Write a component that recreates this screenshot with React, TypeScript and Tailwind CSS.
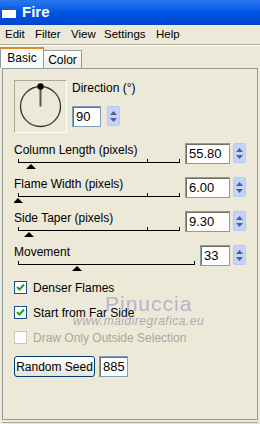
const font = { fontFamily: '"Liberation Sans", Arial, sans-serif' }

const Spinner = () => (
  <div className="flex h-[20px] w-[13px] flex-col items-center justify-center gap-[3px] rounded-[2px] border border-[#b7c8f2] bg-[#c3d3fd]">
    <svg width="7" height="4" viewBox="0 0 7 4">
      <path d="M0 4 L3.5 0 L7 4 Z" fill="#4d6185" />
    </svg>
    <svg width="7" height="4" viewBox="0 0 7 4">
      <path d="M0 0 L3.5 4 L7 0 Z" fill="#4d6185" />
    </svg>
  </div>
)

const NumBox = ({ value, w }: { value: string; w: string }) => (
  <div
    className={`${w} flex h-[21px] items-center border border-[#7f9db9] bg-white pl-[3px] text-[13px] text-black shadow-[inset_1px_1px_0_#716f64]`}
  >
    {value}
  </div>
)

type Track = { width: number; end: number; ticks: number[]; pos: number }

const Slider = ({ t }: { t: Track }) => (
  <svg width={t.width} height="12" viewBox={`0 0 ${t.width} 12`} className="block">
    <line x1="4" y1="3.5" x2={t.end} y2="3.5" stroke="#000" strokeWidth="1" />
    {t.ticks.map((x) => (
      <line key={x} x1={x + 0.5} y1="0" x2={x + 0.5} y2="4" stroke="#000" strokeWidth="1" />
    ))}
    <path d={`M${t.pos - 5} 10 L${t.pos} 5 L${t.pos + 5} 10 Z`} fill="#000" />
  </svg>
)

const SliderRow = ({
  label,
  value,
  track,
  left,
  box,
}: {
  label: string
  value: string
  track: Track
  left: string
  box: string
}) => (
  <div className="flex items-start">
    <div className={`${left} flex flex-col`}>
      <div className="h-[15px] text-[12px] leading-[15px]">{label}</div>
      <div className="mt-[1px]">
        <Slider t={track} />
      </div>
    </div>
    <NumBox value={value} w={box} />
    <div className="ml-[3px]">
      <Spinner />
    </div>
  </div>
)

const Check = ({ label, checked, disabled }: { label: string; checked?: boolean; disabled?: boolean }) => (
  <div className="flex h-[13px] items-center gap-[6px]">
    <div
      className={`flex h-[13px] w-[13px] items-center justify-center border bg-white ${
        disabled ? "border-[#cac8bb]" : "border-[#1c5180]"
      }`}
    >
      {checked && (
        <svg width="9" height="9" viewBox="0 0 9 9">
          <path d="M1 4 L3.5 6.5 L8 1.5" fill="none" stroke="#21a121" strokeWidth="2" />
        </svg>
      )}
    </div>
    <span className={`text-[12px] ${disabled ? "text-[#aca899]" : "text-black"}`}>{label}</span>
  </div>
)

export default function App() {
  return (
    <div className="relative h-[424px] w-[260px] overflow-hidden bg-[#ece9d8] text-black" style={font}>
      {/* title bar */}
      <div className="flex h-[25px] items-center gap-[6px] bg-gradient-to-b from-[#2a78f0] via-[#0054e3] to-[#0046cc] pl-[2px]">
        <div className="h-[11px] w-[14px] border-t-[3px] border-[#1c5bc9] bg-white" />
        <span className="text-[15px] font-bold text-white">Fire</span>
      </div>

      {/* menu */}
      <div className="flex h-[19px] items-center pl-[5px] text-[11.5px]">
        <span className="w-[30px]">Edit</span>
        <span className="w-[36px]">Filter</span>
        <span className="w-[33px]">View</span>
        <span className="w-[52px]">Settings</span>
        <span>Help</span>
      </div>
      <div className="h-[1px] bg-[#aca899]" />
      <div className="h-[1px] bg-white" />

      {/* tabs */}
      <div className="mt-[1px] flex h-[21px] items-end text-[12px]">
        <div className="flex h-[21px] w-[44px] items-center justify-center border-x border-t-[2px] border-x-[#919b9c] border-t-[#e68b2c] bg-[#fcfcfe] pb-[1px]">
          Basic
        </div>
        <div className="flex h-[18px] w-[38px] items-center justify-center border-r border-t border-[#919b9c] bg-gradient-to-b from-white to-[#ecebe6]">
          Color
        </div>
      </div>

      {/* panel */}
      <div className="mx-[2px] h-[352px] border border-[#919b9c] bg-[#ece9d8] pl-[11px]">
        <div className="mt-[11px] flex">
          <div className="h-[53px] w-[53px] border border-b-white border-l-[#aca899] border-r-white border-t-[#aca899]">
            <svg width="51" height="51" viewBox="0 0 51 51" className="block">
              <circle cx="25.5" cy="25.5" r="20" fill="none" stroke="#333" strokeWidth="1.3" />
              <line x1="25.5" y1="25.5" x2="25.5" y2="6" stroke="#555" strokeWidth="2" />
              <circle cx="25.5" cy="5.5" r="3.2" fill="#000" />
            </svg>
          </div>
          <div className="ml-[5px] flex flex-col">
            <div className="mt-[1px] h-[15px] text-[12px] leading-[15px]">Direction (°)</div>
            <div className="mt-[10px] flex">
              <NumBox value="90" w="w-[29px]" />
              <div className="ml-[6px]">
                <Spinner />
              </div>
            </div>
          </div>
        </div>

        <div className="mt-[10px] flex flex-col gap-[6px]">
          <SliderRow
            label="Column Length (pixels)"
            value="55.80"
            left="w-[171px]"
            box="w-[45px]"
            track={{ width: 171, end: 166, ticks: [4, 133, 165], pos: 17 }}
          />
          <SliderRow
            label="Flame Width (pixels)"
            value="6.00"
            left="w-[171px]"
            box="w-[45px]"
            track={{ width: 171, end: 166, ticks: [4, 133, 165], pos: 4 }}
          />
          <SliderRow
            label="Side Taper (pixels)"
            value="9.30"
            left="w-[171px]"
            box="w-[45px]"
            track={{ width: 171, end: 166, ticks: [4, 133, 165], pos: 15 }}
          />
          <SliderRow
            label="Movement"
            value="33"
            left="w-[186px]"
            box="w-[30px]"
            track={{ width: 186, end: 181, ticks: [4, 180], pos: 63 }}
          />
        </div>

        <div className="mt-[8px] flex flex-col gap-[12px]">
          <Check label="Denser Flames" checked />
          <Check label="Start from Far Side" checked />
          <Check label="Draw Only Outside Selection" disabled />
        </div>

        <div className="mt-[12px] flex items-center gap-[4px]">
          <div className="flex h-[21px] w-[81px] items-center justify-center rounded-[3px] border border-[#003c74] bg-gradient-to-b from-white to-[#e6e4d8] text-[12px]">
            Random Seed
          </div>
          <NumBox value="885" w="w-[29px]" />
        </div>
      </div>
      <div className="mx-[2px] mt-[2px] h-[1px] bg-[#aca899]" />

      {/* watermark */}
      <div className="pointer-events-none absolute left-[105px] top-[288px] text-[21px] tracking-[1px] text-[#a9a7c9]/80">
        Pinuccia
      </div>
      <div className="pointer-events-none absolute left-[73px] top-[312px] text-[12px] italic tracking-[0.5px] text-[#8f8e9a]/70">
        www.maidiregrafica.eu
      </div>
    </div>
  )
}
